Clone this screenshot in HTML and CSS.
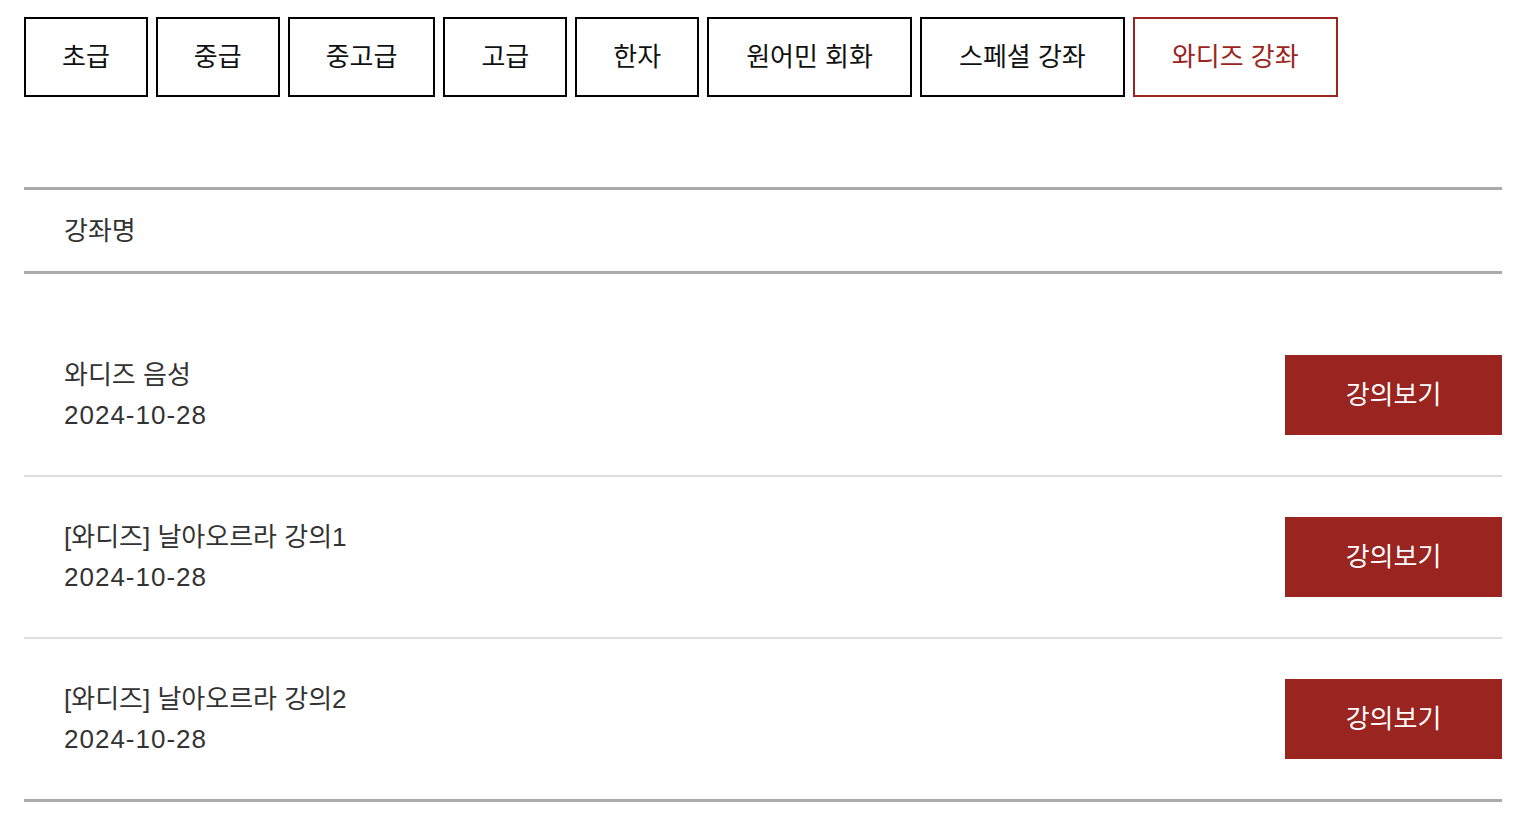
FILE: index.html
```html
<!DOCTYPE html>
<html lang="ko">
<head>
<meta charset="utf-8">
<title>와디즈 강좌</title>
<link rel="stylesheet" href="styles.css">
</head>
<body>
<div class="page">
  <nav class="tabs">
    <a class="tab">초급</a>
    <a class="tab">중급</a>
    <a class="tab">중고급</a>
    <a class="tab">고급</a>
    <a class="tab">한자</a>
    <a class="tab wide">원어민 회화</a>
    <a class="tab wide">스페셜 강좌</a>
    <a class="tab wide active">와디즈 강좌</a>
  </nav>

  <section class="board">
    <div class="board-head">강좌명</div>
    <div class="board-list">
      <div class="row">
        <div class="info">
          <div class="title">와디즈 음성</div>
          <div class="date">2024-10-28</div>
        </div>
        <a class="btn">강의보기</a>
      </div>
      <div class="row">
        <div class="info">
          <div class="title">[와디즈] 날아오르라 강의1</div>
          <div class="date">2024-10-28</div>
        </div>
        <a class="btn">강의보기</a>
      </div>
      <div class="row">
        <div class="info">
          <div class="title">[와디즈] 날아오르라 강의2</div>
          <div class="date">2024-10-28</div>
        </div>
        <a class="btn">강의보기</a>
      </div>
    </div>
  </section>
</div>
</body>
</html>
```

FILE: styles.css
```css
* { box-sizing: border-box; }
html, body { margin: 0; padding: 0; background: #fff; }
body {
  font-family: "Liberation Sans", "Noto Sans CJK KR", sans-serif;
  font-size: 26px;
  color: #333;
}
.page {
  width: 1478px;
  margin-left: 24px;
  padding-top: 17px;
}
.tabs {
  display: flex;
  gap: 8px;
}
.tab {
  display: flex;
  align-items: center;
  justify-content: center;
  height: 80px;
  padding: 0 36px;
  border: 2px solid #000;
  color: #111;
  font-size: 26px;
  line-height: 1;
  white-space: nowrap;
}
.tab.wide {
  padding: 0 37px;
}
.tab.active {
  border-color: #9b2421;
  color: #9b2421;
}
.board {
  margin-top: 90px;
  border-top: 3px solid #aaa;
  border-bottom: 3px solid #aaa;
}
.board-head {
  height: 84px;
  display: flex;
  align-items: center;
  padding-left: 40px;
  border-bottom: 3px solid #aaa;
  color: #333;
  line-height: 1;
}
.board-list {
  padding-top: 41px;
}
.row {
  display: flex;
  align-items: center;
  justify-content: space-between;
  padding: 40px 0 40px 40px;
  border-bottom: 2px solid #ddd;
}
.row:last-child { border-bottom: 0; }
.info { line-height: 40px; }
.title { color: #333; }
.date { color: #333; letter-spacing: 1px; }
.btn {
  display: flex;
  align-items: center;
  justify-content: center;
  width: 217px;
  height: 80px;
  background: #9a2420;
  color: #fff;
  line-height: 1;
}
```
